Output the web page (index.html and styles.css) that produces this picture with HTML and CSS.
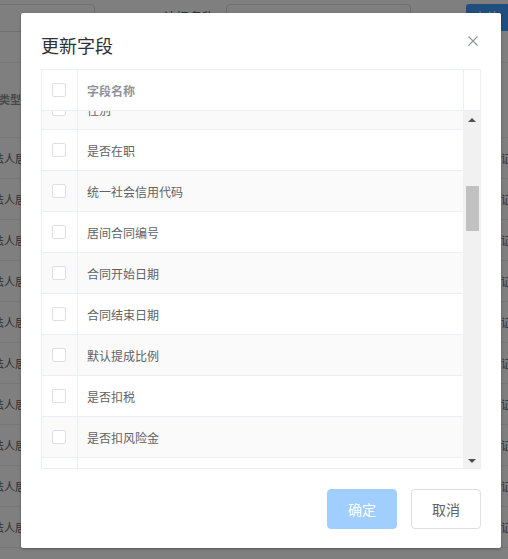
FILE: index.html
```html
<!DOCTYPE html>
<html lang="zh-CN">
<head>
    <meta charset="UTF-8">
    <meta name="viewport" content="width=device-width, initial-scale=1.0">
    <title>更新字段</title>
    <link rel="stylesheet" href="styles.css">
</head>
<body>
    <!-- page behind the dialog -->
    <div class="page">
        <div class="search-bar">
            <div class="search-input short"></div>
            <div class="search-label">认报名称</div>
            <div class="search-input long"></div>
            <div class="search-btn">查询</div>
        </div>

        <div class="bg-table">
            <div class="bg-head">
                <div class="bg-cell first"><span class="bg-text head">证件类型</span></div>
                <div class="bg-cell"></div>
                <div class="bg-cell"></div>
                <div class="bg-cell last"></div>
            </div>
            <div class="bg-row"><div class="bg-cell first"><span class="bg-text">法人居民</span></div><div class="bg-cell"></div><div class="bg-cell"></div><div class="bg-cell last"><span class="bg-text">外国人身份证</span></div></div>
            <div class="bg-row"><div class="bg-cell first"><span class="bg-text">法人居民</span></div><div class="bg-cell"></div><div class="bg-cell"></div><div class="bg-cell last"><span class="bg-text">外国人身份证</span></div></div>
            <div class="bg-row"><div class="bg-cell first"><span class="bg-text">法人居民</span></div><div class="bg-cell"></div><div class="bg-cell"></div><div class="bg-cell last"><span class="bg-text">外国人身份证</span></div></div>
            <div class="bg-row"><div class="bg-cell first"><span class="bg-text">法人居民</span></div><div class="bg-cell"></div><div class="bg-cell"></div><div class="bg-cell last"><span class="bg-text">外国人身份证</span></div></div>
            <div class="bg-row"><div class="bg-cell first"><span class="bg-text">法人居民</span></div><div class="bg-cell"></div><div class="bg-cell"></div><div class="bg-cell last"><span class="bg-text">外国人身份证</span></div></div>
            <div class="bg-row"><div class="bg-cell first"><span class="bg-text">法人居民</span></div><div class="bg-cell"></div><div class="bg-cell"></div><div class="bg-cell last"><span class="bg-text">外国人身份证</span></div></div>
            <div class="bg-row"><div class="bg-cell first"><span class="bg-text">法人居民</span></div><div class="bg-cell"></div><div class="bg-cell"></div><div class="bg-cell last"><span class="bg-text">外国人身份证</span></div></div>
            <div class="bg-row"><div class="bg-cell first"><span class="bg-text">法人居民</span></div><div class="bg-cell"></div><div class="bg-cell"></div><div class="bg-cell last"><span class="bg-text">外国人身份证</span></div></div>
            <div class="bg-row"><div class="bg-cell first"><span class="bg-text">法人居民</span></div><div class="bg-cell"></div><div class="bg-cell"></div><div class="bg-cell last"><span class="bg-text">外国人身份证</span></div></div>
            <div class="bg-row"><div class="bg-cell first"><span class="bg-text">法人居民</span></div><div class="bg-cell"></div><div class="bg-cell"></div><div class="bg-cell last"><span class="bg-text">外国人身份证</span></div></div>
        </div>
    </div>

    <div class="mask"></div>

    <div class="dialog">
        <div class="dialog-header">
            <span class="dialog-title">更新字段</span>
            <button class="dialog-close" aria-label="关闭">
                <svg width="10" height="10" viewBox="0 0 10 10">
                    <path d="M0.5 0.5 L9.5 9.5 M9.5 0.5 L0.5 9.5" stroke="#909399" stroke-width="1.1" fill="none"/>
                </svg>
            </button>
        </div>

        <div class="dialog-body">
            <div class="field-table">
                <div class="field-head">
                    <div class="cell cell-check"><span class="checkbox"></span></div>
                    <div class="cell cell-name">字段名称</div>
                    <div class="cell cell-gutter"></div>
                </div>
                <div class="field-body">
                    <div class="field-rows">
                        <div class="field-list">
                            <div class="field-row"><div class="cell cell-check"><span class="checkbox"></span></div><div class="cell cell-name">性别</div></div>
                            <div class="field-row"><div class="cell cell-check"><span class="checkbox"></span></div><div class="cell cell-name">是否在职</div></div>
                            <div class="field-row"><div class="cell cell-check"><span class="checkbox"></span></div><div class="cell cell-name">统一社会信用代码</div></div>
                            <div class="field-row"><div class="cell cell-check"><span class="checkbox"></span></div><div class="cell cell-name">居间合同编号</div></div>
                            <div class="field-row"><div class="cell cell-check"><span class="checkbox"></span></div><div class="cell cell-name">合同开始日期</div></div>
                            <div class="field-row"><div class="cell cell-check"><span class="checkbox"></span></div><div class="cell cell-name">合同结束日期</div></div>
                            <div class="field-row"><div class="cell cell-check"><span class="checkbox"></span></div><div class="cell cell-name">默认提成比例</div></div>
                            <div class="field-row"><div class="cell cell-check"><span class="checkbox"></span></div><div class="cell cell-name">是否扣税</div></div>
                            <div class="field-row"><div class="cell cell-check"><span class="checkbox"></span></div><div class="cell cell-name">是否扣风险金</div></div>
                            <div class="field-row"><div class="cell cell-check"><span class="checkbox"></span></div><div class="cell cell-name">风险金比例</div></div>
                        </div>
                    </div>
                    <div class="scrollbar">
                        <div class="scroll-arrow up"></div>
                        <div class="scroll-track"><div class="scroll-thumb"></div></div>
                        <div class="scroll-arrow down"></div>
                    </div>
                </div>
            </div>
        </div>

        <div class="dialog-footer">
            <button class="btn btn-primary" disabled>确定</button>
            <button class="btn">取消</button>
        </div>
    </div>
</body>
</html>
```

FILE: styles.css
```css
* {
    margin: 0;
    padding: 0;
    box-sizing: border-box;
}

body {
    width: 508px;
    height: 559px;
    overflow: hidden;
    position: relative;
    background-color: #fff;
    font-family: "Noto Sans CJK SC", "Microsoft YaHei", sans-serif;
    color: #606266;
}

/* ---------- page behind ---------- */

.page {
    width: 100%;
    overflow: hidden;
}

.search-bar {
    display: flex;
    align-items: flex-start;
    height: 62px;
    padding-top: 4px;
}

.search-input {
    height: 28px;
    border: 1px solid #dcdfe6;
    border-radius: 4px;
    background-color: #fff;
    flex-shrink: 0;
}

.search-input.short {
    width: 100px;
    margin-left: -5px;
}

.search-label {
    width: 131px;
    flex-shrink: 0;
    padding-right: 11px;
    text-align: right;
    font-size: 13px;
    line-height: 16px;
    margin-top: 5px;
    color: #606266;
}

.search-input.long {
    width: 185px;
}

.search-btn {
    margin-left: 55px;
    width: 42px;
    flex-shrink: 0;
    height: 27px;
    padding-left: 7px;
    border-radius: 3px 0 0 3px;
    background-color: #409eff;
    color: #fff;
    font-size: 14px;
    line-height: 27px;
    white-space: nowrap;
    overflow: hidden;
}

.bg-table {
    border-top: 1px solid #ebeef5;
}

.bg-head,
.bg-row {
    display: flex;
    border-bottom: 1px solid #ebeef5;
}

.bg-head {
    height: 75px;
}

.bg-row {
    height: 41px;
}

.bg-cell {
    width: 150px;
    flex-shrink: 0;
    border-right: 1px solid #ebeef5;
    display: flex;
    align-items: center;
    overflow: hidden;
    white-space: nowrap;
}

.bg-cell.first {
    width: 117px;
}

.bg-cell.last {
    width: 91px;
    padding-left: 29px;
    border-right: none;
}

.bg-text {
    font-size: 11px;
    color: #606266;
}

.bg-cell.first .bg-text {
    margin-left: -7px;
}

.bg-text.head {
    margin-left: -23px !important;
    font-weight: bold;
    color: #909399;
    margin-top: -3px;
}

/* ---------- mask + dialog ---------- */

.mask {
    position: absolute;
    top: 0;
    left: 0;
    width: 100%;
    height: 100%;
    background-color: rgba(0, 0, 0, 0.5);
}

.dialog {
    position: absolute;
    top: 13px;
    left: 21px;
    width: 480px;
    background-color: #fff;
    border-radius: 2px;
    box-shadow: 0 1px 3px rgba(0, 0, 0, 0.3);
}

.dialog-header {
    position: relative;
    padding: 20px 20px 12px;
}

.dialog-title {
    display: block;
    font-size: 18px;
    line-height: 24px;
    color: #303133;
}

.dialog-close {
    position: absolute;
    top: 23px;
    right: 23px;
    width: 10px;
    height: 10px;
    border: none;
    background: none;
    display: flex;
}

.dialog-body {
    padding: 0 20px;
}

.field-table {
    height: 400px;
    border: 1px solid #ebeef5;
    display: flex;
    flex-direction: column;
    font-size: 12px;
}

.field-head {
    display: flex;
    height: 41px;
    border-bottom: 1px solid #ebeef5;
    flex-shrink: 0;
}

.cell {
    display: flex;
    align-items: center;
}

.cell-check {
    width: 36px;
    padding-left: 10px;
    border-right: 1px solid #ebeef5;
    flex-shrink: 0;
}

.cell-name {
    flex: 1;
    padding-left: 9px;
    white-space: nowrap;
}

.field-head .cell-name {
    color: #909399;
    font-weight: bold;
}

.cell-gutter {
    width: 17px;
    border-left: 1px solid #ebeef5;
}

.checkbox {
    display: block;
    width: 14px;
    height: 14px;
    border: 1px solid #dcdfe6;
    border-radius: 2px;
    background-color: #fff;
}

.field-body {
    flex: 1;
    display: flex;
    min-height: 0;
}

.field-rows {
    flex: 1;
    overflow: hidden;
}

.field-list {
    margin-top: -22px;
}

.field-row {
    display: flex;
    height: 41px;
    border-bottom: 1px solid #ebeef5;
    color: #606266;
}

.field-row:nth-child(odd) {
    background-color: #fafafa;
}

/* fake classic scrollbar */
.scrollbar {
    width: 17px;
    background-color: #f1f1f1;
    display: flex;
    flex-direction: column;
}

.scroll-arrow {
    height: 17px;
    display: flex;
    align-items: center;
    justify-content: center;
}

.scroll-arrow::after {
    content: "";
    border-left: 4px solid transparent;
    border-right: 4px solid transparent;
}

.scroll-arrow.up::after {
    border-bottom: 4px solid #505050;
}

.scroll-arrow.down::after {
    border-top: 4px solid #505050;
    margin-top: 2px;
}

.scroll-track {
    flex: 1;
    padding-top: 58px;
}

.scroll-thumb {
    width: 13px;
    height: 45px;
    margin-left: 3px;
    background-color: #c1c1c1;
}

.dialog-footer {
    display: flex;
    justify-content: flex-end;
    gap: 14px;
    padding: 20px 20px 19px;
}

.btn {
    width: 70px;
    height: 40px;
    border: 1px solid #dcdfe6;
    border-radius: 4px;
    background-color: #fff;
    color: #606266;
    font-family: inherit;
    font-size: 14px;
}

.btn-primary {
    border-color: #a0cfff;
    background-color: #a0cfff;
    color: #fff;
}
```
